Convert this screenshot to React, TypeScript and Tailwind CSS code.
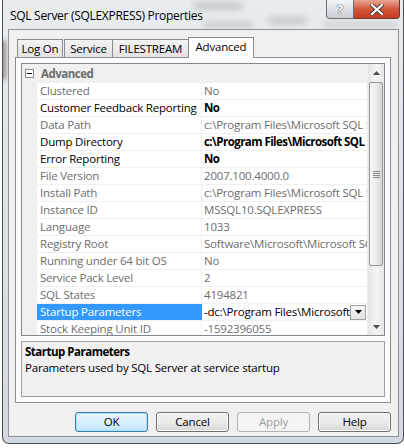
import React from 'react';

type Row = { name: string; value: string; kind: 'ro' | 'mod' | 'sel' };

const rows: Row[] = [
  { name: 'Clustered', value: 'No', kind: 'ro' },
  { name: 'Customer Feedback Reporting', value: 'No', kind: 'mod' },
  { name: 'Data Path', value: 'c:\\Program Files\\Microsoft SQL Server\\MSSQL10.SQLEXPRESS\\MSSQL\\DATA', kind: 'ro' },
  { name: 'Dump Directory', value: 'c:\\Program Files\\Microsoft SQL Server\\MSSQL10.SQLEXPRESS\\MSSQL\\LOG', kind: 'mod' },
  { name: 'Error Reporting', value: 'No', kind: 'mod' },
  { name: 'File Version', value: '2007.100.4000.0', kind: 'ro' },
  { name: 'Install Path', value: 'c:\\Program Files\\Microsoft SQL Server\\MSSQL10.SQLEXPRESS\\MSSQL', kind: 'ro' },
  { name: 'Instance ID', value: 'MSSQL10.SQLEXPRESS', kind: 'ro' },
  { name: 'Language', value: '1033', kind: 'ro' },
  { name: 'Registry Root', value: 'Software\\Microsoft\\Microsoft SQL Server\\MSSQL10.SQLEXPRESS', kind: 'ro' },
  { name: 'Running under 64 bit OS', value: 'No', kind: 'ro' },
  { name: 'Service Pack Level', value: '2', kind: 'ro' },
  { name: 'SQL States', value: '4194821', kind: 'ro' },
  { name: 'Startup Parameters', value: '-dc:\\Program Files\\Microsoft SQL Server\\MSSQL10.SQLEXPRESS', kind: 'sel' },
  { name: 'Stock Keeping Unit ID', value: '-1592396055', kind: 'ro' },
];

function DownTri({ color = '#000' }: { color?: string }) {
  return (
    <svg width="7" height="4" viewBox="0 0 7 4">
      <path d="M0 0 H7 L3.5 4 Z" fill={color} />
    </svg>
  );
}

function UpTri({ color = '#4d4d4d' }: { color?: string }) {
  return (
    <svg width="7" height="4" viewBox="0 0 7 4">
      <path d="M0 4 H7 L3.5 0 Z" fill={color} />
    </svg>
  );
}

function GridRow({ r }: { r: Row }) {
  const sel = r.kind === 'sel';
  const nameCls =
    r.kind === 'ro' ? 'text-[#6d6d6d]' : sel ? 'text-white bg-[#3399ff]' : 'text-black';
  const valCls =
    r.kind === 'ro'
      ? 'text-[#6d6d6d]'
      : r.kind === 'mod'
      ? 'text-black font-bold tracking-[-0.55px]'
      : 'text-black';
  return (
    <div className="flex h-[17px] shrink-0">
      <div className="w-[15px] shrink-0 bg-[#f0f0f0]" />
      <div className="flex flex-1 min-w-0 border-b border-[#f0f0f0]">
        <div
          className={`w-[165px] shrink-0 pl-[3px] leading-[16px] whitespace-nowrap overflow-hidden border-r ${
            sel ? 'border-[#3399ff]' : 'border-[#f0f0f0]'
          } ${nameCls}`}
        >
          {r.name}
        </div>
        <div className={`flex flex-1 min-w-0 items-center ${valCls}`}>
          <div className="flex-1 min-w-0 pl-[2px] leading-[16px] whitespace-nowrap overflow-hidden">
            {r.value}
          </div>
          {sel && (
            <div className="w-[16px] h-[15px] shrink-0 mr-[1px] border border-[#a0a0a0] bg-gradient-to-b from-[#f8f8f8] to-[#e2e2e2] flex items-center justify-center">
              <DownTri />
            </div>
          )}
        </div>
      </div>
    </div>
  );
}

function Btn({ label, kind }: { label: string; kind: 'default' | 'normal' | 'disabled' }) {
  const cls =
    kind === 'default'
      ? 'border-[#3c7fb1] bg-gradient-to-b from-[#eaf6fd] via-[#d9f0fc] to-[#bee6fd] text-black shadow-[inset_0_0_0_1px_#a6e0f8]'
      : kind === 'normal'
      ? 'border-[#707070] bg-gradient-to-b from-[#f2f2f2] via-[#ebebeb] to-[#d5d5d5] text-black shadow-[inset_0_0_0_1px_#fbfbfb]'
      : 'border-[#adb2b5] bg-[#f4f4f4] text-[#a0a0a0]';
  return (
    <div
      className={`w-[73px] h-[20px] rounded-[3px] border flex items-center justify-center leading-none ${cls}`}
    >
      {label}
    </div>
  );
}

function Tab({ label, w, extra }: { label: string; w: string; extra: string }) {
  return (
    <div
      className={`h-[18px] border border-b-0 border-[#898c95] bg-gradient-to-b from-[#f3f3f3] to-[#e3e3e3] leading-[17px] flex justify-center ${w} ${extra}`}
    >
      {label}
    </div>
  );
}

export default function App() {
  return (
    <div className="w-[404px] h-[448px] overflow-hidden bg-white font-['Open_Sans',sans-serif] text-[11.5px] tracking-[-0.2px] text-black select-none">
      {/* Window frame */}
      <div className="relative ml-[2px] w-[402px] h-[444px] border-l border-r border-b border-[#4a4f55] rounded-b-[7px] bg-gradient-to-b from-[#e9ecef] via-[#dde2e7] to-[#d3d9df] flex flex-col overflow-hidden">
        {/* blurred desktop behind glass */}
        <div className="absolute left-[190px] top-[2px] w-[50px] h-[8px] rounded-full bg-[#7a7d80] opacity-30 blur-[3px]" />
        <div className="absolute left-[265px] top-[16px] w-[40px] h-[9px] rounded-full bg-[#7a7d80] opacity-25 blur-[3px]" />
        <div className="absolute left-[200px] top-[21px] w-[50px] h-[7px] rounded-full bg-[#7a7d80] opacity-25 blur-[3px]" />
        <div className="absolute left-[320px] top-[22px] w-[75px] h-[6px] rounded-full bg-[#7a7d80] opacity-25 blur-[3px]" />
        <div className="absolute left-[-3px] top-[40px] w-[6px] h-[40px] rounded-full bg-[#5a3a2a] opacity-50 blur-[2px]" />
        {/* Title bar */}
        <div className="relative h-[29px] shrink-0 flex items-start">
          <div className="ml-[7px] mt-[7px] text-[12px] tracking-[-0.3px] text-black whitespace-nowrap">
            SQL Server (SQLEXPRESS) Properties
          </div>
          <div className="ml-auto mr-[3px] flex">
            <div className="w-[28px] h-[19px] border border-[#6b6f74] border-t-0 rounded-bl-[4px] bg-gradient-to-b from-[#f2f4f6] via-[#dde2e7] to-[#c8ced5] flex items-center justify-center">
              <span className="text-[13px] font-bold text-white [text-shadow:0_0_1px_#333,0_0_1px_#333] leading-none">?</span>
            </div>
            <div className="w-[46px] h-[19px] border border-[#6b3a30] border-t-0 border-l-0 rounded-br-[4px] bg-gradient-to-b from-[#e8a594] via-[#d2573c] to-[#c43a20] flex items-center justify-center">
              <svg width="14" height="11" viewBox="0 0 14 11">
                <path d="M2 1 L12 10 M12 1 L2 10" stroke="#3a3a3a" strokeWidth="4" strokeLinecap="square" />
                <path d="M2 1 L12 10 M12 1 L2 10" stroke="#ffffff" strokeWidth="2.2" strokeLinecap="square" />
              </svg>
            </div>
          </div>
        </div>

        {/* Client area */}
        <div className="relative ml-[5px] w-[391px] h-[408px] shrink-0 border border-[#8e9399] bg-[#f0f0f0] flex flex-col">
          {/* Tabs */}
          <div className="ml-[8px] mt-[7px] flex items-end h-[20px] relative z-10">
            <Tab label="Log On" w="w-[46px]" extra="" />
            <Tab label="Service" w="w-[49px]" extra="ml-[1px]" />
            <Tab label="FILESTREAM" w="w-[77px]" extra="-ml-[1px]" />
            <div className="h-[21px] w-[66px] -mb-[1px] -ml-[1px] border border-b-0 border-[#898c95] bg-white leading-[18px] flex justify-center">
              Advanced
            </div>
          </div>
          {/* Tab panel */}
          <div className="ml-[6px] w-[376px] h-[346px] border border-[#898c95] bg-[#fcfcfc] p-[5px] flex flex-col">
            {/* Property grid */}
            <div className="h-[273px] shrink-0 border border-[#828790] bg-white flex overflow-hidden">
              <div className="flex-1 min-w-0 flex flex-col overflow-hidden">
                <div className="h-[19px] shrink-0 bg-[#f0f0f0] flex items-center">
                  <div className="w-[15px] shrink-0 flex justify-center">
                    <div className="w-[9px] h-[9px] border border-[#8c8c8c] bg-white flex items-center justify-center">
                      <div className="w-[5px] h-[1px] bg-black" />
                    </div>
                  </div>
                  <div className="pl-[4px] font-bold tracking-[-0.5px] text-[#6d6d6d]">Advanced</div>
                </div>
                {rows.map((r) => (
                  <GridRow key={r.name} r={r} />
                ))}
              </div>
              {/* Scrollbar */}
              <div className="w-[17px] shrink-0 bg-gradient-to-r from-[#e6e6e6] via-[#f4f4f4] to-[#e6e6e6] border-l border-[#ececec] flex flex-col">
                <div className="h-[17px] shrink-0 flex items-center justify-center">
                  <UpTri />
                </div>
                <div className="mx-[1px] mt-[1px] h-[184px] shrink-0 rounded-[2px] border border-[#959595] bg-gradient-to-r from-[#f6f6f6] via-[#ececec] to-[#d6d6d6] flex flex-col items-center justify-center gap-[1px]">
                  <div className="w-[7px] h-[1px] bg-[#8a8a8a]" />
                  <div className="w-[7px] h-[1px] bg-[#8a8a8a]" />
                  <div className="w-[7px] h-[1px] bg-[#8a8a8a]" />
                  <div className="w-[7px] h-[1px] bg-[#8a8a8a]" />
                </div>
                <div className="flex-1" />
                <div className="h-[17px] shrink-0 flex items-center justify-center">
                  <DownTri color="#4d4d4d" />
                </div>
              </div>
            </div>
            {/* Description pane */}
            <div className="mt-[5px] h-[56px] shrink-0 border border-[#a0a0a0] bg-[#f0f0f0] px-[3px] pt-[2px]">
              <div className="font-bold tracking-[-0.5px] leading-[16px]">Startup Parameters</div>
              <div className="leading-[16px]">Parameters used by SQL Server at service startup</div>
            </div>
          </div>
          {/* Buttons */}
          <div className="mt-[9px] mr-[7px] flex justify-end gap-[8px]">
            <Btn label="OK" kind="default" />
            <Btn label="Cancel" kind="normal" />
            <Btn label="Apply" kind="disabled" />
            <Btn label="Help" kind="normal" />
          </div>
        </div>
      </div>
    </div>
  );
}
